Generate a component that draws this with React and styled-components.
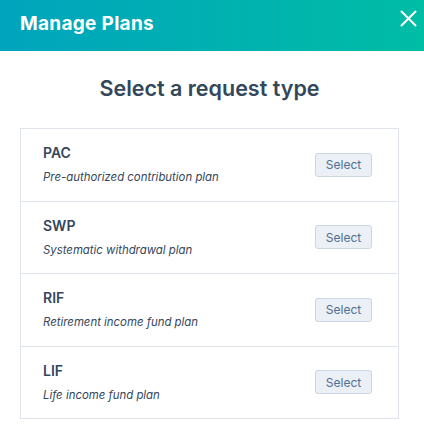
import React from 'react';
import styled, { createGlobalStyle } from 'styled-components';

const GlobalStyle = createGlobalStyle`
  body {
    margin: 0;
    background: #ffffff;
    font-family: Inter, "Noto Sans", sans-serif;
    color: #33475b;
  }
`;

const Modal = styled.div`
  width: 424px;
  height: 433px;
  background: #ffffff;
  overflow: hidden;
`;

const Header = styled.header`
  height: 51px;
  display: flex;
  align-items: center;
  justify-content: space-between;
  padding: 0 6px 0 20px;
  box-sizing: border-box;
  background: linear-gradient(to right, #00a4bd, #00bda5);
`;

const HeaderTitle = styled.h1`
  margin: 0 0 4px;
  font-size: 19px;
  font-weight: 700;
  letter-spacing: 0.3px;
  color: #ffffff;
`;

const CloseButton = styled.button`
  align-self: flex-start;
  margin-top: 8px;
  width: 20px;
  height: 20px;
  padding: 0;
  border: 0;
  background: transparent;
  color: #ffffff;
  display: flex;
  align-items: center;
  justify-content: center;
  cursor: pointer;
`;

const Body = styled.main`
  padding: 0 25px 0 20px;
`;

const Heading = styled.h2`
  margin: 22px 0 0;
  height: 30px;
  line-height: 30px;
  text-align: center;
  font-size: 21.5px;
  font-weight: 600;
  color: #33475b;
`;

const Card = styled.ul`
  list-style: none;
  margin: 25px 0 0;
  padding: 0;
  border: 1px solid #dfe3eb;
`;

const Row = styled.li`
  display: flex;
  align-items: center;
  justify-content: space-between;
  padding: 15px 26px 15.5px 22px;
  border-top: ${({ $first }) => ($first ? '0' : '1px solid #dfe3eb')};
`;

const Info = styled.div`
  display: flex;
  flex-direction: column;
  gap: 7px;
`;

const Code = styled.span`
  font-size: 14px;
  line-height: 18px;
  font-weight: 600;
  color: #33475b;
`;

const Description = styled.span`
  font-size: 11.4px;
  line-height: 16px;
  font-style: italic;
  color: #33475b;
`;

const SelectButton = styled.button`
  width: 57px;
  height: 24px;
  padding: 0;
  border: 1px solid #cbd6e2;
  border-radius: 3px;
  background: #eaf0f6;
  color: #506e91;
  font-family: Inter, "Noto Sans", sans-serif;
  font-size: 12px;
  cursor: pointer;
`;

const plans = [
  { code: 'PAC', description: 'Pre-authorized contribution plan' },
  { code: 'SWP', description: 'Systematic withdrawal plan' },
  { code: 'RIF', description: 'Retirement income fund plan' },
  { code: 'LIF', description: 'Life income fund plan' },
];

const App = () => (
  <>
    <GlobalStyle />
    <Modal>
      <Header>
        <HeaderTitle>Manage Plans</HeaderTitle>
        <CloseButton aria-label="Close">
          <svg width="17" height="17" viewBox="0 0 17 17" fill="none">
            <path
              d="M1.5 1.5L15.5 15.5M15.5 1.5L1.5 15.5"
              stroke="#ffffff"
              strokeWidth="2"
              strokeLinecap="round"
            />
          </svg>
        </CloseButton>
      </Header>
      <Body>
        <Heading>Select a request type</Heading>
        <Card>
          {plans.map((plan, i) => (
            <Row key={plan.code} $first={i === 0}>
              <Info>
                <Code>{plan.code}</Code>
                <Description>{plan.description}</Description>
              </Info>
              <SelectButton>Select</SelectButton>
            </Row>
          ))}
        </Card>
      </Body>
    </Modal>
  </>
);

export default App;
